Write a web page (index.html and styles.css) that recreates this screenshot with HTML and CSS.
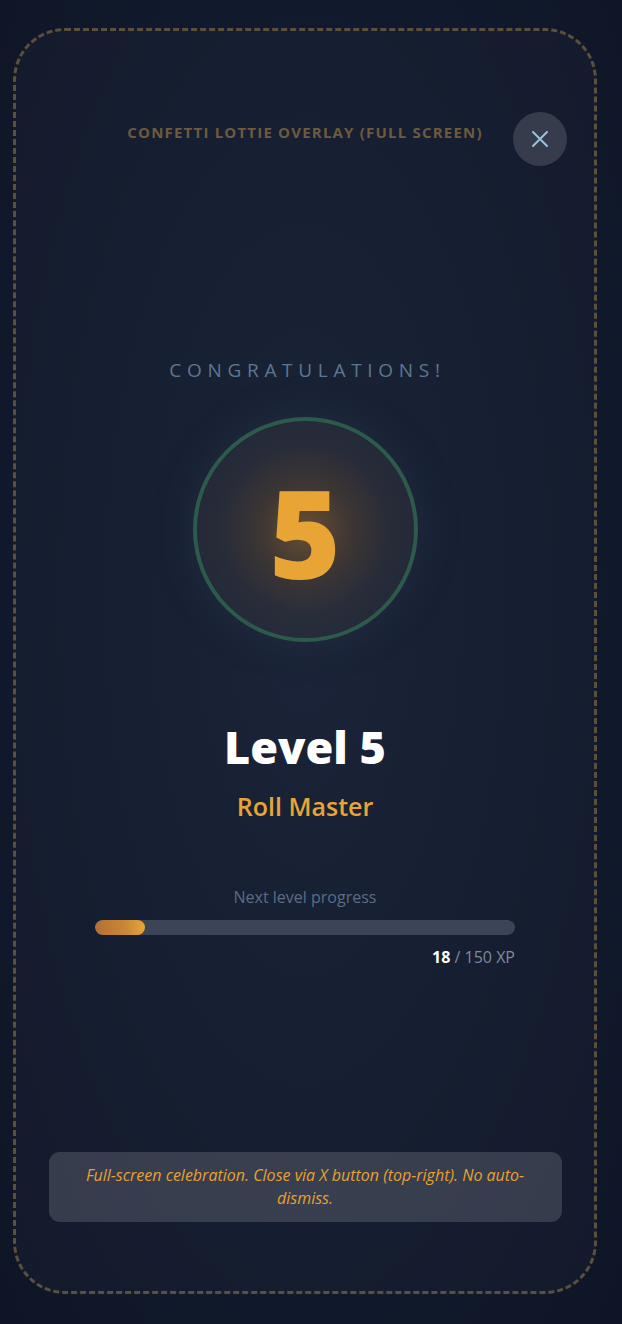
FILE: index.html
```html
<!DOCTYPE html>
<html>
<head>
    <title>Level Up</title>
    <meta name="viewport" content="width=device-width, initial-scale=1.0" />
    <meta http-equiv="Content-Type" content="text/html;charset=utf-8" />
    <link rel="stylesheet" href="styles.css">
</head>
<body>

<!-- Khung overlay -->
<div class="frame">
    <div class="top-bar">
        <span></span>
        <div class="overlay-title">Confetti Lottie Overlay (Full Screen)</div>
        <button class="close-btn" aria-label="Close">
            <svg width="20" height="20" viewBox="0 0 20 20">
                <path d="M3 3 L17 17 M17 3 L3 17" stroke="#9cc0dd" stroke-width="2" stroke-linecap="round" fill="none"/>
            </svg>
        </button>
    </div>

    <div class="congrats">Congratulations!</div>

    <!-- Vòng tròn cấp độ -->
    <div class="level-ring">
        <span class="level-num">5</span>
    </div>

    <div class="level-title">Level 5</div>
    <div class="level-name">Roll Master</div>

    <!-- Tiến trình -->
    <div class="progress">
        <div class="progress-label">Next level progress</div>
        <div class="progress-track">
            <div class="progress-fill" style="width: 12%;"></div>
        </div>
        <div class="progress-xp"><b>18</b> / 150 XP</div>
    </div>

    <div class="note">Full-screen celebration. Close via X button (top-right). No auto-dismiss.</div>
</div>

</body>
</html>
```

FILE: styles.css
```css
/* Tổng quan */
html, body {
    margin: 0;
    height: 100%;
    font-family: "Open Sans", "Noto Sans", sans-serif;
    color: #FFFFFF;
    background: radial-gradient(ellipse at 50% 45%, #172036 0%, #111a2d 60%, #0e1526 100%);
}

body {
    padding: 28px 25px 30px 13px;
    box-sizing: border-box;
}

/* Khung viền nét đứt */
.frame {
    height: 1266px;
    box-sizing: border-box;
    border: 3px dashed #5c4f3b;
    border-radius: 52px;
    background: radial-gradient(ellipse at 50% 45%, #1b2438 0%, #161e31 55%, #131a2c 100%);
    display: flex;
    flex-direction: column;
    align-items: center;
    padding-top: 81px;
}

.top-bar {
    width: 100%;
    display: grid;
    grid-template-columns: 1fr auto 1fr;
    align-items: center;
    padding-right: 27px;
    box-sizing: border-box;
    padding-left: 27px;
}

.overlay-title {
    font-size: 15px;
    font-weight: 700;
    letter-spacing: 1.2px;
    text-transform: uppercase;
    color: #6e5a3c;
    margin-top: -14px;
}

.close-btn {
    justify-self: end;
    width: 54px;
    height: 54px;
    border-radius: 50%;
    border: none;
    background-color: rgba(255, 255, 255, 0.14);
    display: flex;
    align-items: center;
    justify-content: center;
    padding: 0;
}

.congrats {
    margin-top: 191px;
    font-size: 19px;
    font-weight: 500;
    line-height: 26px;
    letter-spacing: 5.7px;
    text-transform: uppercase;
    color: #5e7791;
    padding-left: 5px;
}

/* Vòng tròn */
.level-ring {
    margin-top: 34px;
    width: 225px;
    height: 225px;
    box-sizing: border-box;
    border: 4px solid #2c5a4b;
    border-radius: 50%;
    display: flex;
    align-items: center;
    justify-content: center;
    background: radial-gradient(circle, rgba(232, 150, 40, 0.38) 0%, rgba(200, 130, 40, 0.2) 30%, rgba(130, 105, 75, 0.14) 55%, rgba(70, 68, 78, 0.12) 100%);
    box-shadow: 0 0 40px rgba(60, 70, 90, 0.25);
}

.level-num {
    font-size: 122px;
    font-weight: 800;
    line-height: 1;
    color: #e8a535;
    margin-top: 4px;
}

.level-title {
    margin-top: 76px;
    font-size: 45px;
    font-weight: 800;
    line-height: 58px;
    color: #ffffff;
}

.level-name {
    margin-top: 13px;
    font-size: 25px;
    font-weight: 600;
    line-height: 34px;
    color: #e8a535;
}

/* Thanh tiến trình */
.progress {
    margin-top: 63px;
    width: 420px;
    display: flex;
    flex-direction: column;
    align-items: center;
}

.progress-label {
    font-size: 16px;
    line-height: 22px;
    color: #5c6c86;
}

.progress-track {
    margin-top: 12px;
    width: 100%;
    height: 15px;
    border-radius: 8px;
    background-color: #3d4457;
    overflow: hidden;
}

.progress-fill {
    height: 100%;
    border-radius: 8px;
    background: linear-gradient(90deg, #b37033 0%, #c8873a 60%, #e8a535 100%);
}

.progress-xp {
    align-self: flex-end;
    margin-top: 11px;
    font-size: 16px;
    line-height: 22px;
    color: #7d8aa0;
}

.progress-xp b {
    color: #ffffff;
}

/* Ghi chú */
.note {
    margin-top: auto;
    margin-bottom: 69px;
    width: 513px;
    box-sizing: border-box;
    padding: 12px 30px;
    border-radius: 11px;
    background-color: rgba(255, 255, 255, 0.15);
    font-size: 16px;
    font-style: italic;
    line-height: 23px;
    text-align: center;
    color: #e8a030;
}
```
